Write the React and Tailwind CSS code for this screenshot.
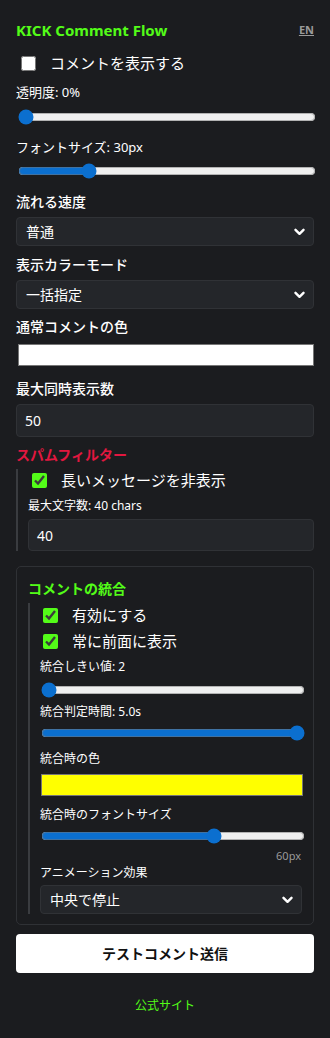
import React from "react";

const Chevron = () => (
  <svg className="pointer-events-none absolute right-[9px] top-1/2 -translate-y-1/2" width="11" height="8" viewBox="0 0 11 8">
    <path d="M1.5 1.8 L5.5 5.8 L9.5 1.8" fill="none" stroke="#ffffff" strokeWidth="2.4" strokeLinecap="round" strokeLinejoin="round" />
  </svg>
);

const Select = ({ value, className = "" }) => (
  <div className={"relative " + className}>
    <select
      defaultValue={value}
      className="w-full h-[29px] appearance-none rounded-[4px] border border-[#303236] bg-[#24262a] pl-[9px] pr-6 text-[14px] text-white outline-none"
    >
      <option>{value}</option>
    </select>
    <Chevron />
  </div>
);

const Range = ({ value, max = 100, min = 0, className = "" }) => (
  <input
    type="range"
    min={min}
    max={max}
    defaultValue={value}
    className={"block h-4 accent-[#0b6fcf] " + className}
  />
);

const Check = ({ checked }) => (
  <input
    type="checkbox"
    defaultChecked={checked}
    className="h-[15px] w-[15px] accent-[#53fc18] m-0"
  />
);

export default function App() {
  return (
    <div className="min-h-[1038px] w-[330px] bg-[#1b1c1f] px-4 pb-4 pt-[20px] text-white font-['Noto_Sans','Noto_Sans_CJK_JP',sans-serif]">
      <div className="flex items-center justify-between">
        <h1 className="text-[15px] font-bold text-[#53fc18] leading-[20px]">KICK Comment Flow</h1>
        <span className="text-[11px] font-bold text-[#9a9a9a] underline">EN</span>
      </div>

      <label className="mt-[13px] flex items-center gap-[14px] pl-[5px] text-[15px] leading-[20px]">
        <Check checked={false} />
        <span>コメントを表示する</span>
      </label>

      <div className="mt-[10px] text-[13px] leading-[18px]">透明度: 0%</div>
      <Range value={0} className="mt-[8px] w-[298px] ml-[2px]" />

      <div className="mt-[13px] text-[13px] leading-[18px]">フォントサイズ: 30px</div>
      <Range value={30} min={10} max={100} className="mt-[7px] w-[298px] ml-[2px]" />

      <div className="mt-[14px] text-[14px] leading-[18px] font-medium">流れる速度</div>
      <Select value="普通" className="mt-[6px]" />

      <div className="mt-[10px] text-[14px] leading-[18px] font-medium">表示カラーモード</div>
      <Select value="一括指定" className="mt-[6px]" />

      <div className="mt-[9px] text-[14px] leading-[18px] font-medium">通常コメントの色</div>
      <div className="mt-[8px] ml-[2px] h-[22px] w-[296px] border border-[#767676] bg-white" />

      <div className="mt-[14px] text-[14px] leading-[18px] font-medium">最大同時表示数</div>
      <div className="mt-[6px] flex h-[33px] items-center rounded-[4px] border border-[#303236] bg-[#24262a] pl-[8px] text-[14px]">50</div>

      <div className="mt-[9px] text-[14px] font-bold text-[#e2173f] leading-[18px]">スパムフィルター</div>
      <div className="mt-[5px] border-l-2 border-[#3a3c40] pl-[10px]">
        <label className="ml-[4px] flex items-center gap-[14px] text-[15px] leading-[20px] pt-[1px]">
          <Check checked />
          <span>長いメッセージを非表示</span>
        </label>
        <div className="mt-[8px] text-[12px] leading-[16px]">最大文字数: 40 chars</div>
        <div className="mt-[5px] flex h-[32px] items-center rounded-[4px] border border-[#303236] bg-[#24262a] pl-[8px] text-[14px]">40</div>
      </div>

      <div className="mt-[15px] rounded-[5px] border border-[#2f3135] px-[11px] pb-[10px] pt-[13px]">
        <div className="text-[14px] font-bold text-[#53fc18] leading-[18px]">コメントの統合</div>
        <div className="mt-[5px] border-l-2 border-[#3a3c40] pl-[10px]">
          <label className="ml-[3px] flex items-center gap-[14px] text-[15px] leading-[20px] pt-[2px]">
            <Check checked />
            <span>有効にする</span>
          </label>
          <label className="ml-[3px] mt-[6px] flex items-center gap-[14px] text-[15px] leading-[20px]">
            <Check checked />
            <span>常に前面に表示</span>
          </label>
          <div className="mt-[8px] text-[12px] leading-[16px]">統合しきい値: 2</div>
          <Range value={2} min={2} max={10} className="mt-[7px] w-[264px] ml-[1px]" />
          <div className="mt-[6px] text-[12px] leading-[16px]">統合判定時間: 5.0s</div>
          <Range value={5} min={1} max={5} className="mt-[5px] w-[264px] ml-[1px]" />
          <div className="mt-[10px] text-[12px] leading-[16px]">統合時の色</div>
          <div className="mt-[7px] ml-[1px] h-[22px] w-[262px] border border-[#767676] bg-[#ffff00]" />
          <div className="mt-[11px] text-[12px] leading-[16px]">統合時のフォントサイズ</div>
          <Range value={60} min={20} max={80} className="mt-[5px] w-[264px] ml-[1px]" />
          <div className="mt-[5px] text-right pr-[1px] text-[11px] text-[#9a9a9a] leading-[14px]">60px</div>
          <div className="mt-[2px] text-[12px] leading-[16px]">アニメーション効果</div>
          <Select value="中央で停止" className="mt-[4px]" />
        </div>
      </div>

      <button className="mt-[9px] h-[39px] w-full rounded-[4px] bg-white text-[14px] font-bold text-[#111]">テストコメント送信</button>

      <div className="mt-[24px] text-center text-[12px] text-[#53fc18]">公式サイト</div>
    </div>
  );
}
